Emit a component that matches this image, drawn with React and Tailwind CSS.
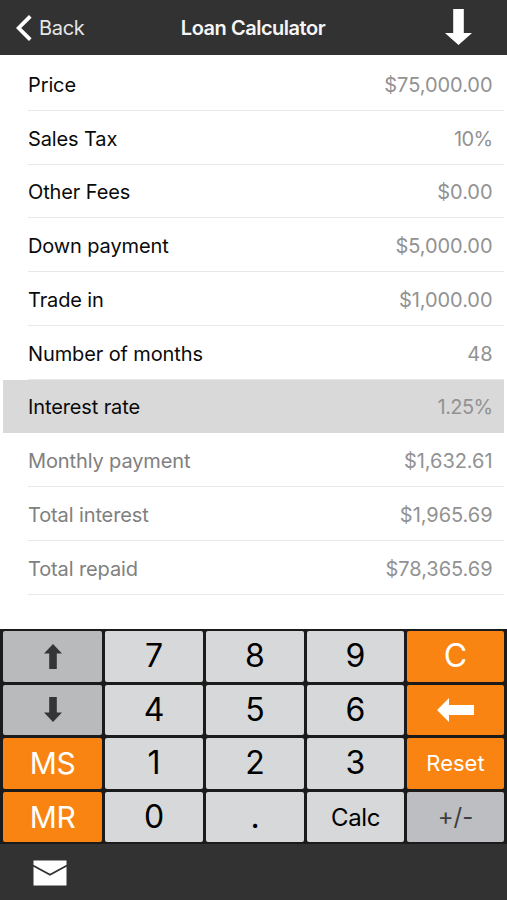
const rows = [
  { label: 'Price', value: '$75,000.00' },
  { label: 'Sales Tax', value: '10%' },
  { label: 'Other Fees', value: '$0.00' },
  { label: 'Down payment', value: '$5,000.00' },
  { label: 'Trade in', value: '$1,000.00' },
  { label: 'Number of months', value: '48' },
  { label: 'Interest rate', value: '1.25%', active: true },
  { label: 'Monthly payment', value: '$1,632.61', result: true },
  { label: 'Total interest', value: '$1,965.69', result: true },
  { label: 'Total repaid', value: '$78,365.69', result: true },
]

const tones = {
  light: 'bg-[#d6d8d9] text-black',
  gray: 'bg-[#b9babc] text-[#333536]',
  sign: 'bg-[#bdbec1] text-[#3c3e42]',
  orange: 'bg-[#fa8412] text-white',
}

const UpArrow = () => (
  <svg width="18" height="25" viewBox="0 0 18 25" fill="currentColor">
    <path d="M9 0 18 9.5H12.8V25H5.2V9.5H0Z" />
  </svg>
)

const DownArrow = () => (
  <svg width="18" height="25" viewBox="0 0 18 25" fill="currentColor">
    <path d="M5.2 0H12.8V15.5H18L9 25 0 15.5H5.2Z" />
  </svg>
)

const LeftArrow = () => (
  <svg width="37" height="24" viewBox="0 0 37 24" fill="currentColor">
    <path d="M0 12 12 0V7H37V17H12V24Z" />
  </svg>
)

const keys = [
  { id: 'up', content: <UpArrow />, tone: 'gray' },
  { id: '7' },
  { id: '8' },
  { id: '9' },
  { id: 'C', tone: 'orange' },
  { id: 'down', content: <DownArrow />, tone: 'gray' },
  { id: '4' },
  { id: '5' },
  { id: '6' },
  { id: 'back', content: <LeftArrow />, tone: 'orange' },
  { id: 'MS', tone: 'orange', size: 'text-[30px] tracking-[-0.5px]' },
  { id: '1' },
  { id: '2' },
  { id: '3' },
  { id: 'Reset', tone: 'orange', size: 'text-[22px]' },
  { id: 'MR', tone: 'orange', size: 'text-[30px] tracking-[-0.5px]' },
  { id: '0' },
  { id: '.' },
  { id: 'Calc', size: 'text-2xl tracking-[-0.4px] pt-0.5' },
  { id: '+/-', tone: 'sign', size: 'text-2xl' },
]

function Header() {
  return (
    <header className="grid h-[54.5px] shrink-0 grid-cols-[1fr_auto_1fr] items-center bg-[#323232] text-white">
      <button type="button" className="flex items-center gap-[7px] pt-0.5 pl-4 text-xl tracking-[-0.3px] text-[#e6e6e6]">
        <svg width="16" height="26" viewBox="0 0 16 26" fill="none" stroke="white" strokeWidth="3.8">
          <path d="M14.3 1.3 2.6 13 14.3 24.7" />
        </svg>
        <span>Back</span>
      </button>
      <h1 className="pt-0.5 pr-px text-xl font-semibold tracking-[-0.48px] text-[#f5f5f5]">Loan Calculator</h1>
      <button type="button" className="justify-self-end pr-[35px]">
        <svg width="27" height="36" viewBox="0 0 27 36" fill="white">
          <path d="M8.2 0H18.8V24H27L13.5 36 0 24H8.2Z" />
        </svg>
      </button>
    </header>
  )
}

function Row({ label, value, active, result }) {
  return (
    <li className={`h-[53.75px] pl-[25px] ${active ? 'bg-[#d9d9d9]' : ''}`}>
      <div
        className={`flex h-full items-center justify-between border-b pt-[3px] pr-[11.5px] ${active ? 'border-transparent' : 'border-[#e8e8e8]'}`}
      >
        <span className={`tracking-[-0.12px] ${result ? 'text-[#808080]' : 'text-[#0a0a0a]'}`}>{label}</span>
        <span className={`text-[#929292] ${value.endsWith('%') ? 'tracking-[-0.6px]' : 'tracking-[-0.05px]'}`}>
          {value}
        </span>
      </div>
    </li>
  )
}

function Key({ id, content, tone = 'light', size = 'text-[32px]' }) {
  return (
    <button type="button" className={`flex items-center justify-center rounded-[2px] leading-none ${size} ${tones[tone]}`}>
      {content ?? id}
    </button>
  )
}

export default function App() {
  return (
    <div className="flex h-[900px] w-[507px] flex-col overflow-hidden bg-white font-['Inter',sans-serif]">
      <Header />
      <ul className="mx-[3px] mt-[2.5px] grow text-xl">
        {rows.map((row) => (
          <Row key={row.label} {...row} />
        ))}
      </ul>
      <div className="grid h-[215px] shrink-0 grid-cols-[99px_98px_98px_97px_97px] grid-rows-4 gap-[3px] bg-[#1b1b1b] py-[2px] pl-[3px]">
        {keys.map((key) => (
          <Key key={key.id} {...key} />
        ))}
      </div>
      <footer className="flex h-14 shrink-0 items-start bg-[#323232] pt-4 pl-[33px]">
        <svg width="34" height="26" viewBox="0 0 34 26">
          <path fill="white" d="M0.5 0.5H33.5V25.5H0.5Z" />
          <path fill="none" stroke="#323232" strokeWidth="1.8" d="M0 5.5 17 14.8 34 5.5" />
        </svg>
      </footer>
    </div>
  )
}
